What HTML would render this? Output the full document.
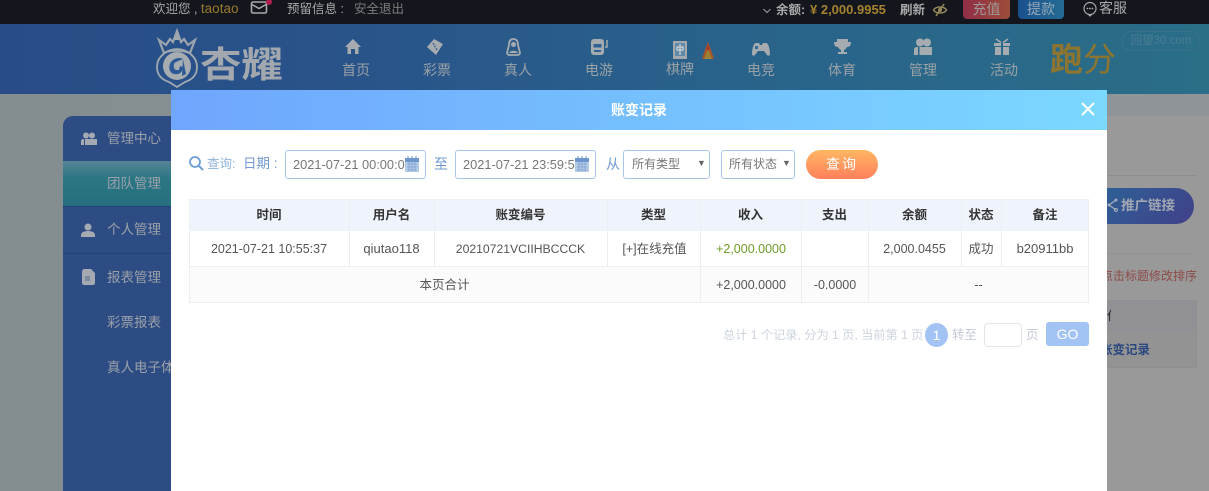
<!DOCTYPE html>
<html><head><meta charset="utf-8"><style>
*{box-sizing:border-box}
html,body{margin:0;padding:0;width:1209px;height:491px;overflow:hidden;background:#999;font-family:"Liberation Sans","Noto Sans CJK SC",sans-serif;font-size:13px}
.a{position:absolute;white-space:nowrap}
.nav{position:absolute;top:62px;width:50px;text-align:center;font-size:14px;line-height:16px;color:#9aa1a6}
.ic{position:absolute}
.side{position:absolute;left:107px;font-size:13.5px;color:#9aa0a8;line-height:16px;white-space:nowrap}
.c{position:absolute;text-align:center;color:#555;font-size:12.5px;line-height:36px;white-space:nowrap}
.h{position:absolute;text-align:center;color:#333;font-size:12.5px;line-height:32px;top:199px;font-weight:bold}
.v{position:absolute;width:1px;background:#eceef2}
.inp{position:absolute;top:150px;height:29px;border:1px solid #a9c5ea;border-radius:3px;background:#fff;color:#777;font-size:12.8px;line-height:27px;padding-left:7px;overflow:hidden;white-space:nowrap}
</style></head><body>
<div class="a" style="left:0;top:94px;width:1209px;height:397px;background:linear-gradient(90deg,#848d90 0,#899093 60%,#999 100%)"></div>
<div class="a" style="left:1100px;top:94px;width:109px;height:22px;background:#8e9498"></div>
<div class="a" style="left:1100px;top:116px;width:109px;height:375px;background:#999"></div>
<!-- top bar -->
<div class="a" style="left:0;top:0;width:1209px;height:24px;background:#14161d"></div>
<div class="a" style="left:153px;top:1px;font-size:12.5px;line-height:16px;color:#a9a9a9">欢迎您 , <span style="color:#9a7a2c;font-size:13.5px">taotao</span></div>
<svg class="ic" style="left:250px;top:0" width="22" height="16" viewBox="0 0 22 16"><rect x="1.500" y="2" width="15" height="11" rx="1.500" fill="none" stroke="#aaa" stroke-width="1.600"/><path d="M2 4.500l7 4 7-4" fill="none" stroke="#aaa" stroke-width="1.500"/><circle cx="19" cy="2" r="3" fill="#b0204f"/></svg>
<div class="a" style="left:287px;top:1px;font-size:12.5px;line-height:16px;color:#a9a9a9">预留信息 :</div>
<div class="a" style="left:354px;top:1px;font-size:12.5px;line-height:16px;color:#7c7c7c">安全退出</div>
<svg class="ic" style="left:762px;top:7px" width="10" height="8" viewBox="0 0 10 8"><path d="M1.500 2l3.500 3.500L8.500 2" fill="none" stroke="#999" stroke-width="1.100"/></svg>
<div class="a" style="left:776px;top:2px;font-size:12.5px;line-height:16px;color:#aaa;font-weight:bold">余额:</div>
<div class="a" style="left:810px;top:2px;font-size:13px;line-height:16px;color:#a5822f;font-weight:bold">¥ 2,000.9955</div>
<div class="a" style="left:900px;top:2px;font-size:12.5px;line-height:16px;color:#aaa;font-weight:bold">刷新</div>
<svg class="ic" style="left:932px;top:2px" width="16" height="16" viewBox="0 0 16 16"><path d="M1.500 8C4 4 12 4 14.500 8 12 12 4 12 1.500 8z" fill="none" stroke="#958a5a" stroke-width="1.500"/><path d="M4 14L12 2" stroke="#958a5a" stroke-width="1.500"/><circle cx="8" cy="8" r="2" fill="#958a5a"/></svg>
<div class="a" style="left:963px;top:0;width:47px;height:19px;border-radius:0 0 4px 4px;background:linear-gradient(90deg,#902e46,#9c4c3a);color:#a09898;font-size:14px;line-height:18px;text-align:center">充值</div>
<div class="a" style="left:1018px;top:0;width:46px;height:19px;border-radius:0 0 4px 4px;background:linear-gradient(90deg,#1b508e,#246c94);color:#98a8b8;font-size:14px;line-height:18px;text-align:center">提款</div>
<svg class="ic" style="left:1082px;top:1px" width="16" height="16" viewBox="0 0 16 16"><path d="M6 13l2 2 2-2" fill="none" stroke="#aaa" stroke-width="1.200"/><circle cx="8" cy="7.500" r="6" fill="none" stroke="#aaa" stroke-width="1.200"/><circle cx="5.500" cy="7.500" r=".9" fill="#aaa"/><circle cx="8" cy="7.500" r=".9" fill="#aaa"/><circle cx="10.500" cy="7.500" r=".9" fill="#aaa"/></svg>
<div class="a" style="left:1099px;top:0;font-size:14px;line-height:17px;color:#aaa">客服</div>
<!-- header -->
<div class="a" style="left:0;top:24px;width:1209px;height:70px;background:linear-gradient(90deg,#284c88 0,#29548a 30%,#29628a 60%,#2a6e88 100%)"></div>
<!-- logo -->
<svg class="ic" style="left:152px;top:28px" width="50" height="62" viewBox="0 0 50 62"><path d="M7 12l7 5 4-6 3 3 4-11 4 11 3-3 4 6 7-5-5 13c-8-3-21-3-26 0z" fill="none" stroke="#9ca4ac" stroke-width="2.200"/><path d="M25 3l2.500 9h-5z" fill="#a0a8b0"/><path d="M25 21c-9 0-20 7-20 18 0 9 6 13 12 15l8 5 8-5c6-2 12-6 12-15 0-11-11-18-20-18z" fill="none" stroke="#a0a8b0" stroke-width="1.800"/><circle cx="25" cy="38" r="14" fill="#a6acb0"/><path d="M19 34c3-4 9-5 12-3l-7 3c-3 1-3 7 0 8h3l1-4 3 1c0 6-5 8-9 7-5-1-6-8-3-12z" fill="#2d5a96"/><path d="M31 31l3 15-4 2z" fill="#2d5a96"/></svg>
<div class="a" style="left:200px;top:43px;font-size:36px;line-height:44px;font-weight:bold;color:#a2a8ae;transform-origin:left center;transform:scaleX(1.150)">杏耀</div>
<!-- nav icons -->
<svg class="ic" style="left:344px;top:38px" width="18" height="18" viewBox="0 0 18 18"><path d="M9 1L1 9h2.500v7H7v-5h4v5h3.500V9H17z" fill="#a6abaf"/></svg>
<svg class="ic" style="left:425px;top:38px" width="20" height="18" viewBox="0 0 20 18"><path d="M2 9l7-8 9 5-7 11z" fill="#a6abaf"/><path d="M8 5l4 7" stroke="#2c5f96" stroke-width="1.200" stroke-dasharray="2 1"/></svg>
<svg class="ic" style="left:505px;top:38px" width="17" height="18" viewBox="0 0 17 18"><path d="M8.500 1C5 1 4 4 4 7L2 15c0 1 1 2 3 2h7c2 0 3-1 3-2l-2-8c0-3-1-6-4.500-6z" fill="none" stroke="#a6abaf" stroke-width="1.800"/><circle cx="8.500" cy="6.500" r="2.500" fill="#a6abaf"/><path d="M4 15c1-3 8-3 9 0z" fill="#a6abaf"/></svg>
<svg class="ic" style="left:590px;top:38px" width="20" height="18" viewBox="0 0 20 18"><rect x="1" y="1" width="13" height="16" rx="3" fill="#a6abaf"/><rect x="3.500" y="6" width="8" height="3.500" fill="#2c6296"/><rect x="4" y="12" width="7" height="2" fill="#2c6296"/><path d="M17 2v7h-2" fill="none" stroke="#a6abaf" stroke-width="1.500"/></svg>
<svg class="ic" style="left:672px;top:40px" width="17" height="19" viewBox="0 0 17 19"><rect x="1" y="1" width="14" height="18" fill="#a3a9ad"/><rect x="3" y="3" width="10" height="13" fill="#5f8ba8"/><path d="M8 4v11M5 7h6v3H5z" fill="none" stroke="#d0d4d6" stroke-width="1.200"/></svg>
<svg class="ic" style="left:700px;top:41px" width="16" height="20" viewBox="0 0 16 20"><path d="M8 1l3 8 3 9H2l3-9z" fill="#a8552a"/><path d="M8 8l4 10H4z" fill="#9c8232"/><path d="M8 3l1.500 6h-3z" fill="#a8352c"/></svg>
<svg class="ic" style="left:751px;top:41px" width="20" height="16" viewBox="0 0 20 16"><path d="M5 2h3l1 2h2l1-2h3c3 0 4 8 4 11 0 2-2 2-3 1l-3-4H7l-3 4c-1 1-3 1-3-1 0-3 1-11 4-11z" fill="#a6abaf"/><rect x="4" y="5" width="3" height="3" fill="#2f6c97"/></svg>
<svg class="ic" style="left:833px;top:38px" width="19" height="18" viewBox="0 0 19 18"><path d="M4 1h11v3h3c0 3-1 5-4 5-1 2-2 2.500-3 3v2h3v2H5v-2h3v-2c-1-.5-2-1-3-3C2 9 1 7 1 4h3z" fill="#a6abaf"/></svg>
<svg class="ic" style="left:913px;top:38px" width="20" height="18" viewBox="0 0 20 18"><circle cx="7" cy="4.500" r="4" fill="#a6abaf"/><circle cx="14" cy="4.500" r="4" fill="#a6abaf"/><path d="M1 17v-5c0-2 1-3 3-3h1v8zM6.500 17V9h12.500v8z" fill="#a6abaf"/></svg>
<svg class="ic" style="left:993px;top:38px" width="18" height="18" viewBox="0 0 18 18"><path d="M1 5h7v3H1zM10 5h7v3h-7zM2 9h6v8H2zM10 9h6v8h-6z" fill="#a6abaf"/><path d="M3 1l5 3.500M15 1l-5 3.500" stroke="#a6abaf" stroke-width="1.500"/></svg>
<div class="nav" style="left:331px">首页</div>
<div class="nav" style="left:412px">彩票</div>
<div class="nav" style="left:493px">真人</div>
<div class="nav" style="left:574px">电游</div>
<div class="nav" style="left:655px;top:61px">棋牌</div>
<div class="nav" style="left:736px">电竞</div>
<div class="nav" style="left:817px">体育</div>
<div class="nav" style="left:898px">管理</div>
<div class="nav" style="left:979px">活动</div>
<div class="a" style="left:1050px;top:41px;font-size:33px;line-height:38px;color:#8c7530;font-weight:bold">跑<span style="font-weight:normal">分</span></div>
<!-- watermark -->
<div class="a" style="left:1122px;top:31px;width:78px;height:20px;border:1px solid #3a7088;border-radius:9px;color:#4c7c94;font-size:11.500px;line-height:18px;text-align:center">回望30.com</div>
<!-- sidebar -->
<div class="a" style="left:63px;top:116px;width:110px;height:375px;background:#2e4c84;border-radius:10px 0 0 0"></div>
<div class="a" style="left:63px;top:161px;width:110px;height:45px;background:linear-gradient(180deg,#568494 0,#2b7684 40%,#256f7e 100%)"></div>
<div class="a" style="left:63px;top:206px;width:110px;height:1px;background:#24427a"></div>
<div class="a" style="left:63px;top:253px;width:110px;height:1px;background:#24427a"></div>
<svg class="ic" style="left:81px;top:132px" width="16" height="14" viewBox="0 0 16 14"><circle cx="5" cy="3.500" r="3" fill="#a5aab2"/><circle cx="11" cy="3.500" r="3" fill="#a5aab2"/><path d="M0 13V9c0-1 1-2 2-2h1v6zM4 13V7h12v6z" fill="#a5aab2"/></svg>
<svg class="ic" style="left:81px;top:223px" width="14" height="14" viewBox="0 0 14 14"><circle cx="7" cy="4" r="3.500" fill="#a5aab2"/><path d="M0 14v-2c0-3 4-4 7-4s7 1 7 4v2z" fill="#a5aab2"/></svg>
<svg class="ic" style="left:82px;top:269px" width="13" height="16" viewBox="0 0 13 16"><path d="M3 0h6l4 4v10c0 1-1 2-2 2H2c-1 0-2-1-2-2V3c0-2 1-3 3-3z" fill="#a5aab2"/><path d="M3 7h5v5H3z" fill="#7d8a9c"/></svg>
<div class="side" style="top:131px">管理中心</div>
<div class="side" style="top:176px">团队管理</div>
<div class="side" style="top:222px">个人管理</div>
<div class="side" style="top:270px">报表管理</div>
<div class="side" style="top:315px">彩票报表</div>
<div class="side" style="top:360px">真人电子体育</div>
<!-- right behind -->
<div class="a" style="left:1100px;top:175px;width:97px;height:1px;background:#8d8d8d"></div>
<div class="a" style="left:1080px;top:188px;width:114px;height:36px;border-radius:18px;background:linear-gradient(135deg,#2a6698,#414088)"></div>
<svg class="ic" style="left:1106px;top:198px" width="12" height="15" viewBox="0 0 12 15"><path d="M10 2L3 7l7 5" fill="none" stroke="#a5abb8" stroke-width="1.300"/><circle cx="10" cy="2" r="1.500" fill="#a5abb8"/><circle cx="10" cy="12" r="1.500" fill="none" stroke="#a5abb8"/><circle cx="3" cy="7" r="1.500" fill="#a5abb8"/></svg>
<div class="a" style="left:1121px;top:198px;font-size:13.500px;line-height:16px;color:#a0a6b2;font-weight:bold">推广链接</div>
<div class="a" style="left:1100px;top:253px;width:93px;height:1px;background:#929292"></div>
<div class="a" style="left:1101px;top:268px;font-size:12px;line-height:16px;color:#8e4a48">点击标题修改排序</div>
<div class="a" style="left:1100px;top:300px;width:97px;height:68px;background:#939393;border:1px solid #8f8f8f"></div>
<div class="a" style="left:1100px;top:301px;width:97px;height:30px;background:#909095"></div>
<div class="a" style="left:1107px;top:308px;font-size:12px;line-height:16px;color:#222;width:4px;overflow:hidden">作</div>
<div class="a" style="left:1100px;top:342px;font-size:12.500px;line-height:16px;color:#2a4880;font-weight:bold">账变记录</div>
<!-- modal -->
<div class="a" style="left:171px;top:90px;width:936px;height:401px;background:#fff"></div>
<div class="a" style="left:171px;top:90px;width:936px;height:40px;background:linear-gradient(90deg,#6fa6fe,#7bd8ff)"></div>
<div class="a" style="left:611px;top:102px;font-size:14px;line-height:16px;color:#fff;font-weight:bold">账变记录</div>
<svg class="ic" style="left:1081px;top:102px" width="14" height="14" viewBox="0 0 14 14"><path d="M1 1l12 12M13 1L1 13" stroke="#fff" stroke-width="2"/></svg>
<!-- filter -->
<svg class="ic" style="left:188px;top:155px" width="17" height="17" viewBox="0 0 17 17"><circle cx="7" cy="7" r="5" fill="none" stroke="#6d9fd8" stroke-width="1.800"/><path d="M10.500 10.500l4.500 4.500" stroke="#6d9fd8" stroke-width="2"/></svg>
<div class="a" style="left:207px;top:156px;font-size:12.500px;line-height:16px;color:#8fb2dc">查询:</div>
<div class="a" style="left:243px;top:156px;font-size:13.500px;line-height:16px;color:#6f99d0">日期 :</div>
<div class="inp" style="left:285px;width:141px">2021-07-21 00:00:0</div>
<div class="inp" style="left:455px;width:141px">2021-07-21 23:59:5</div>
<svg class="ic" style="left:404px;top:156px" width="16" height="16" viewBox="0 0 16 16"><rect x="1" y="2" width="14" height="14" fill="#b4cbe6"/><rect x="1" y="2" width="14" height="4" fill="#6d96cc"/><path d="M4 0v3M8 0v3M12 0v3" stroke="#6d96cc"/><path d="M3 8h10M3 11h10M3 14h10M5 6v9M8 6v9M11 6v9" stroke="#7ea2d0" stroke-width=".7"/></svg>
<svg class="ic" style="left:574px;top:156px" width="16" height="16" viewBox="0 0 16 16"><rect x="1" y="2" width="14" height="14" fill="#b4cbe6"/><rect x="1" y="2" width="14" height="4" fill="#6d96cc"/><path d="M4 0v3M8 0v3M12 0v3" stroke="#6d96cc"/><path d="M3 8h10M3 11h10M3 14h10M5 6v9M8 6v9M11 6v9" stroke="#7ea2d0" stroke-width=".7"/></svg>
<div class="a" style="left:434px;top:156px;font-size:14px;line-height:16px;color:#6f99d0">至</div>
<div class="a" style="left:606px;top:156px;font-size:14px;line-height:16px;color:#6f99d0">从</div>
<div class="inp" style="left:623px;width:87px;font-size:12px;padding-left:8px">所有类型<span class="a" style="left:73px;top:-1px;font-size:9px;color:#666">▼</span></div>
<div class="inp" style="left:721px;width:74px;font-size:12px;padding-left:7px">所有状态<span class="a" style="left:60px;top:-1px;font-size:9px;color:#666">▼</span></div>
<div class="a" style="left:806px;top:150px;width:72px;height:29px;border-radius:15px;background:linear-gradient(180deg,#ffb763,#ff7f5c);color:#fff;font-size:14px;line-height:29px;text-align:center;letter-spacing:2px">查询</div>
<!-- table -->
<div class="a" style="left:189px;top:199px;width:900px;height:32px;background:#eff3fb"></div>
<div class="a" style="left:189px;top:267px;width:900px;height:36px;background:#fbfbfb"></div>
<div class="a" style="left:189px;top:199px;width:900px;height:104px;border:1px solid #eceef2"></div>
<div class="a" style="left:189px;top:266px;width:900px;height:1px;background:#eceef2"></div>
<div class="v" style="left:349px;top:199px;height:68px"></div>
<div class="v" style="left:434px;top:199px;height:68px"></div>
<div class="v" style="left:607px;top:199px;height:68px"></div>
<div class="v" style="left:700px;top:199px;height:104px"></div>
<div class="v" style="left:801px;top:199px;height:104px"></div>
<div class="v" style="left:868px;top:199px;height:104px"></div>
<div class="v" style="left:961px;top:199px;height:68px"></div>
<div class="v" style="left:1001px;top:199px;height:68px"></div>
<div class="h" style="left:189px;width:160px">时间</div>
<div class="h" style="left:349px;width:85px">用户名</div>
<div class="h" style="left:434px;width:173px">账变编号</div>
<div class="h" style="left:607px;width:93px">类型</div>
<div class="h" style="left:700px;width:101px">收入</div>
<div class="h" style="left:801px;width:67px">支出</div>
<div class="h" style="left:868px;width:93px">余额</div>
<div class="h" style="left:961px;width:40px">状态</div>
<div class="h" style="left:1001px;width:88px">备注</div>
<div class="c" style="left:189px;width:160px;top:231px">2021-07-21 10:55:37</div>
<div class="c" style="left:349px;width:85px;top:231px;font-size:13px">qiutao118</div>
<div class="c" style="left:434px;width:173px;top:231px;font-size:12.200px">20210721VCIIHBCCCK</div>
<div class="c" style="left:607px;width:93px;top:231px;padding-left:2px">[+]在线充值</div>
<div class="c" style="left:700px;width:101px;top:231px;color:#6f9a26;padding-left:1px">+2,000.0000</div>
<div class="c" style="left:868px;width:93px;top:231px">2,000.0455</div>
<div class="c" style="left:961px;width:40px;top:231px">成功</div>
<div class="c" style="left:1001px;width:88px;top:231px;font-size:13px">b20911bb</div>
<div class="c" style="left:189px;width:511px;top:267px">本页合计</div>
<div class="c" style="left:700px;width:101px;top:267px;padding-left:1px">+2,000.0000</div>
<div class="c" style="left:801px;width:67px;top:267px;padding-left:1px">-0.0000</div>
<div class="c" style="left:868px;width:221px;top:267px">--</div>
<!-- pagination -->
<div class="a" style="left:723px;top:327px;font-size:12.200px;line-height:16px;color:#ccd3de">总计 1 个记录, 分为 1 页, 当前第 1 页</div>
<div class="a" style="left:925px;top:323px;width:23px;height:24px;border-radius:50%;background:#a3c3f5;color:#fff;font-size:14px;line-height:24px;text-align:center">1</div>
<div class="a" style="left:952px;top:327px;font-size:12.500px;line-height:16px;color:#c3cad6">转至</div>
<div class="a" style="left:984px;top:323px;width:38px;height:24px;border:1px solid #e3e5ea;border-radius:4px;background:#fff"></div>
<div class="a" style="left:1026px;top:327px;font-size:12.500px;line-height:16px;color:#c3cad6">页</div>
<div class="a" style="left:1046px;top:322px;width:43px;height:24px;border-radius:3px;background:#a3c3f5;color:#fff;font-size:14px;line-height:24px;text-align:center">GO</div>
</body></html>
